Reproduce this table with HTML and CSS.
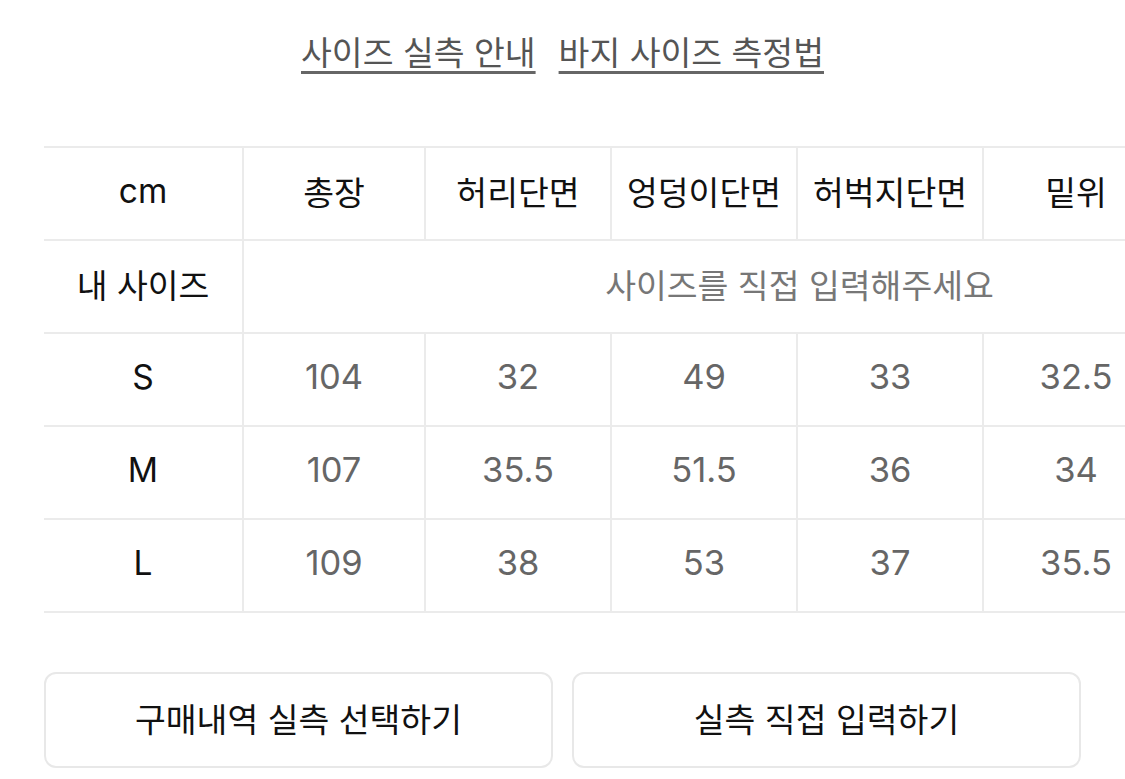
FILE: index.html
```html
<!DOCTYPE html>
<html lang="ko">
<head>
<meta charset="utf-8">
<title>사이즈 실측 안내</title>
<link rel="stylesheet" href="styles.css">
</head>
<body>
<div class="page">
  <nav class="links">
    <a class="link" href="#">사이즈 실측 안내</a>
    <a class="link" href="#">바지 사이즈 측정법</a>
  </nav>
  <div class="table-wrap">
    <table class="size-table">
      <colgroup>
        <col class="c-first"><col class="c-short"><col class="c-std"><col class="c-std"><col class="c-std"><col class="c-std"><col class="c-std">
      </colgroup>
      <thead>
        <tr class="head">
          <th>cm</th><th>총장</th><th>허리단면</th><th>엉덩이단면</th><th>허벅지단면</th><th>밑위</th><th>밑단단면</th>
        </tr>
      </thead>
      <tbody>
        <tr>
          <th>내 사이즈</th>
          <td colspan="6" class="placeholder">사이즈를 직접 입력해주세요</td>
        </tr>
        <tr><th>S</th><td>104</td><td>32</td><td>49</td><td>33</td><td>32.5</td><td>22</td></tr>
        <tr><th>M</th><td>107</td><td>35.5</td><td>51.5</td><td>36</td><td>34</td><td>23.5</td></tr>
        <tr><th>L</th><td>109</td><td>38</td><td>53</td><td>37</td><td>35.5</td><td>25</td></tr>
      </tbody>
    </table>
  </div>
  <div class="actions">
    <button class="btn" type="button">구매내역 실측 선택하기</button>
    <button class="btn" type="button">실측 직접 입력하기</button>
  </div>
</div>
</body>
</html>
```
FILE: styles.css
```css
* { box-sizing: border-box; }
html, body { margin: 0; background: #fff; }
body {
  font-family: Inter, "Noto Sans CJK KR", sans-serif;
  color: #111;
  overflow: hidden;
}
.page {
  padding: 32px 44px 0 44px;
}
.links {
  display: flex;
  justify-content: center;
  gap: 23px;
  height: 114px;
}
.link {
  font-size: 33.5px;
  line-height: 42px;
  color: #555;
  text-decoration: underline;
  text-decoration-thickness: 3px;
  text-underline-offset: 6px;
  text-decoration-color: #666;
}
.table-wrap {
  margin-right: -44px;
  overflow: hidden;
}
.size-table {
  border-collapse: collapse;
  table-layout: fixed;
  width: 1311px;
}
.c-first { width: 199px; }
.c-short { width: 182px; }
.c-std { width: 186px; }
.size-table th,
.size-table td {
  height: 93px;
  padding: 0 0 6px 0;
  text-align: center;
  vertical-align: middle;
  border-top: 2px solid #ebebeb;
  border-bottom: 2px solid #ebebeb;
  border-left: 2px solid #ebebeb;
  font-size: 33.5px;
}
.size-table tr > :first-child { border-left: none; }
.size-table th {
  font-weight: 400;
  color: #111;
}
.size-table td {
  color: #666;
  font-size: 34.5px;
}
.size-table td.placeholder {
  color: #777;
  font-size: 33.5px;
}
.actions {
  display: flex;
  gap: 19px;
  margin-top: 59px;
}
.btn {
  flex: 1;
  height: 96px;
  background: #fff;
  border: 2px solid #e8e8e8;
  border-radius: 12px;
  font-family: Inter, "Noto Sans CJK KR", sans-serif;
  font-size: 33.5px;
  color: #111;
  padding: 0 0 6px 0;
}
```
